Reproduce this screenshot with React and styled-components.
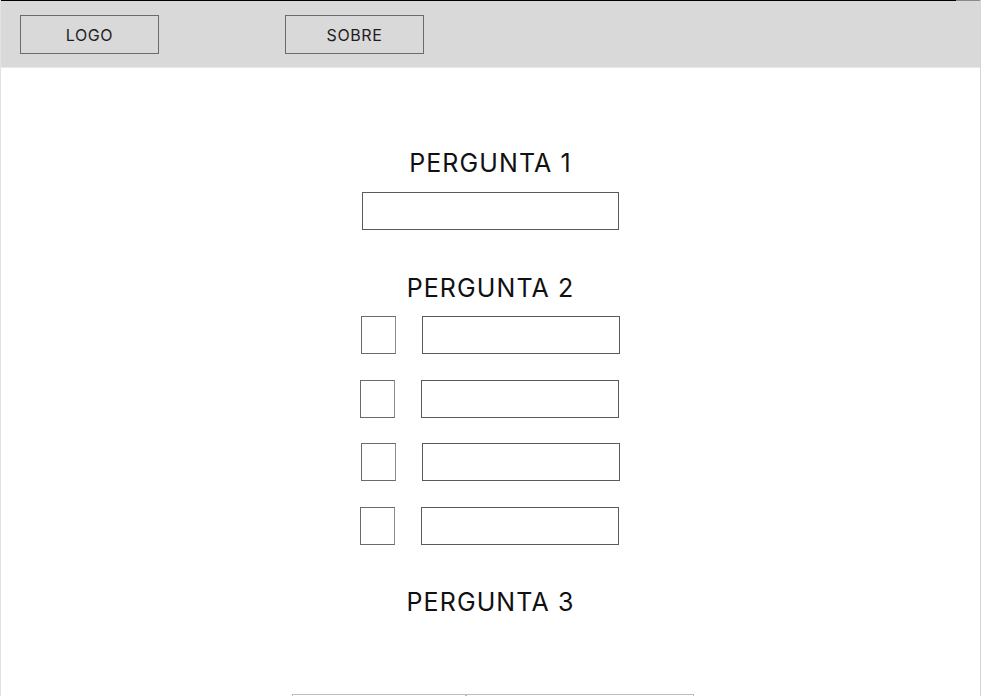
import styled, { createGlobalStyle } from "styled-components";

const GlobalStyle = createGlobalStyle`
  html, body {
    margin: 0;
    padding: 0;
    background: #fff;
  }
  body {
    font-family: Inter, "Liberation Sans", sans-serif;
    color: #1e1e1e;
  }
`;

const Frame = styled.div`
  height: 696px;
  overflow: hidden;
  box-sizing: border-box;
  border-left: 1px solid #e2e2e2;
  border-right: 1px solid #d6d6d6;
`;

const Header = styled.header`
  height: 68px;
  box-sizing: border-box;
  background: linear-gradient(to right, #000 955px, #8a8a8a 955px) top / 100% 1px no-repeat, #d9d9d9;
  border-bottom: 1px solid #e8e8e8;
  display: flex;
  align-items: flex-start;
  padding: 15px 0 0 19px;
  gap: 126px;
`;

const NavButton = styled.button`
  width: 139px;
  height: 39px;
  box-sizing: border-box;
  background: transparent;
  border: 1px solid #6b6b6b;
  font-family: Inter, "Liberation Sans", sans-serif;
  font-size: 16px;
  letter-spacing: 0.6px;
  color: #1e1e1e;
  padding: 0;
`;

const Main = styled.main`
  display: flex;
  flex-direction: column;
  align-items: center;
  padding-top: 81px;
`;

const Question = styled.section`
  display: flex;
  flex-direction: column;
  align-items: center;
  margin-bottom: ${(p) => (p.$after ?? 44)}px;
`;

const Title = styled.h2`
  margin: 0 0 ${(p) => p.$gap || 14}px;
  font-size: 25px;
  font-weight: 400;
  line-height: 29px;
  letter-spacing: 1.1px;
  color: #111;
`;

const TextBox = styled.div`
  width: ${(p) => p.$w || 257}px;
  height: 38px;
  box-sizing: border-box;
  border: 1px solid ${(p) => (p.$light ? "#bdbdbd" : "#5a5a5a")};
  background: #fff;
`;

const Options = styled.div`
  display: flex;
  flex-direction: column;
  gap: 25.5px;
`;

const OptionRow = styled.div`
  display: flex;
  gap: 26px;
  margin-left: ${(p) => p.$shift || 0}px;
`;

const Check = styled.div`
  width: 35px;
  height: 38px;
  box-sizing: border-box;
  border: 1px solid #6a6a6a;
  border-right-color: #8c8c8c;
  background: #fff;
`;

const BottomRow = styled.div`
  display: flex;
  margin-left: 4px;
`;

const options = [0, -1, 0, -1];

export default function App() {
  return (
    <>
      <GlobalStyle />
      <Frame>
        <Header>
          <NavButton>LOGO</NavButton>
          <NavButton>SOBRE</NavButton>
        </Header>
        <Main>
          <Question>
            <Title>PERGUNTA 1</Title>
            <TextBox />
          </Question>
          <Question $after={43}>
            <Title $gap={13}>PERGUNTA 2</Title>
            <Options>
              {options.map((shift, i) => (
                <OptionRow key={i} $shift={shift}>
                  <Check />
                  <TextBox $w={198} />
                </OptionRow>
              ))}
            </Options>
          </Question>
          <Question $after={0}>
            <Title $gap={77}>PERGUNTA 3</Title>
            <BottomRow>
              <TextBox $w={174} $light />
              <TextBox $w={228} $light />
            </BottomRow>
          </Question>
        </Main>
      </Frame>
    </>
  );
}
